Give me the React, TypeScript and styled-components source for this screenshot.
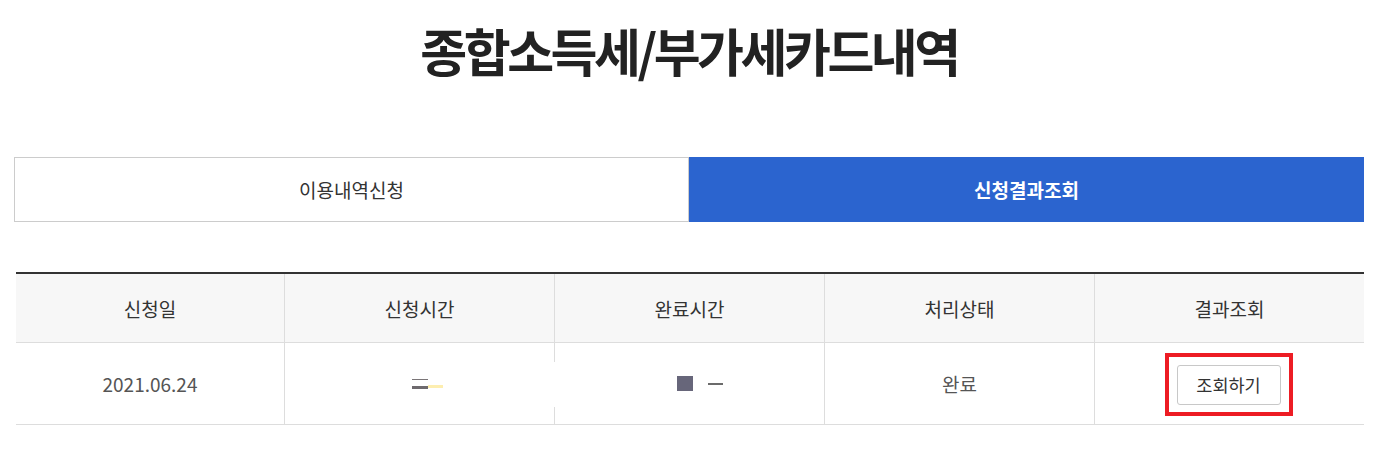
import styled, { createGlobalStyle } from "styled-components";

const GlobalStyle = createGlobalStyle`
  html, body {
    margin: 0;
    padding: 0;
    background: #fff;
  }
  body {
    font-family: "Noto Sans CJK KR", "Noto Sans", sans-serif;
    color: #333;
  }
`;

const Page = styled.div`
  width: 1350px;
  margin-left: 14px;
  padding-top: 4px;
`;

const Title = styled.h2`
  margin: 0;
  height: 92px;
  text-align: center;
  font-size: 51px;
  font-weight: 700;
  letter-spacing: -3.5px;
  line-height: 92px;
  color: #222;
`;

const Tabs = styled.div`
  display: flex;
  margin-top: 61px;
`;

const Tab = styled.button<{ $active?: boolean }>`
  flex: 1;
  height: 65px;
  border: 1px solid ${(p) => (p.$active ? "#2b64cf" : "#cccccc")};
  background: ${(p) => (p.$active ? "#2b64cf" : "#fff")};
  color: ${(p) => (p.$active ? "#fff" : "#333")};
  font-family: inherit;
  font-size: 19px;
  font-weight: ${(p) => (p.$active ? 700 : 400)};
  padding: 0;
`;

const Table = styled.div`
  margin: 50px 0 0 2px;
  border-top: 2px solid #333;
`;

const Row = styled.div<{ $head?: boolean }>`
  display: grid;
  grid-template-columns: 268px 270px 270px 270px 270px;
  height: ${(p) => (p.$head ? "68px" : "81px")};
  background: ${(p) => (p.$head ? "#f7f7f7" : "#fff")};
  border-bottom: 1px solid #dddddd;
`;

const Cell = styled.div<{ $head?: boolean }>`
  position: relative;
  display: flex;
  align-items: center;
  justify-content: center;
  border-left: 1px solid #dddddd;
  font-size: 19px;
  color: ${(p) => (p.$head ? "#333" : "#555")};
  &:first-child {
    border-left: none;
  }
`;

/* redaction patch that hides part of the divider */
const Patch = styled.span`
  position: absolute;
  left: -1px;
  top: 19px;
  width: 3px;
  height: 45px;
  background: #fff;
`;

const Marks = styled.span<{ $shift?: number; $center?: boolean }>`
  display: inline-flex;
  align-items: ${(p) => (p.$center ? "center" : "flex-end")};
  margin-left: ${(p) => p.$shift ?? 0}px;
`;

const GreyLines = styled.span`
  display: inline-flex;
  flex-direction: column;
  gap: 6px;
  width: 16px;
  & > i:first-child {
    height: 1px;
    background: #7a7578;
  }
  & > i:last-child {
    height: 3px;
    background: #6e6a6e;
  }
`;

const Yellow = styled.span`
  width: 15px;
  height: 3px;
  margin-bottom: 1px;
  background: #fdeeb0;
`;

const Square = styled.span`
  width: 16px;
  height: 15px;
  background: #67667a;
`;

const Dash = styled.span`
  width: 15px;
  height: 2px;
  margin-left: 15px;
  background: #6b6b6b;
`;

const Highlight = styled.span`
  display: inline-flex;
  padding: 8px 8px 7px 8px;
  border: 4px solid #ed1c24;
  margin-top: 1px;
  margin-left: -2px;
`;

const SmallButton = styled.button`
  width: 104px;
  height: 40px;
  border: 1px solid #c8c8c8;
  border-radius: 3px;
  background: #fff;
  color: #333;
  font-family: inherit;
  font-size: 17.5px;
  padding: 0;
`;

const heads = ["신청일", "신청시간", "완료시간", "처리상태", "결과조회"];

export default function App() {
  return (
    <>
      <GlobalStyle />
      <Page>
        <Title>종합소득세/부가세카드내역</Title>
        <Tabs>
          <Tab>이용내역신청</Tab>
          <Tab $active>신청결과조회</Tab>
        </Tabs>
        <Table>
          <Row $head>
            {heads.map((h) => (
              <Cell $head key={h}>
                {h}
              </Cell>
            ))}
          </Row>
          <Row>
            <Cell>2021.06.24</Cell>
            <Cell>
              <Marks $shift={16}>
                <GreyLines>
                  <i />
                  <i />
                </GreyLines>
                <Yellow />
              </Marks>
            </Cell>
            <Cell>
              <Patch />
              <Marks $center $shift={20}>
                <Square />
                <Dash />
              </Marks>
            </Cell>
            <Cell>완료</Cell>
            <Cell>
              <Highlight>
                <SmallButton>조회하기</SmallButton>
              </Highlight>
            </Cell>
          </Row>
        </Table>
      </Page>
    </>
  );
}
